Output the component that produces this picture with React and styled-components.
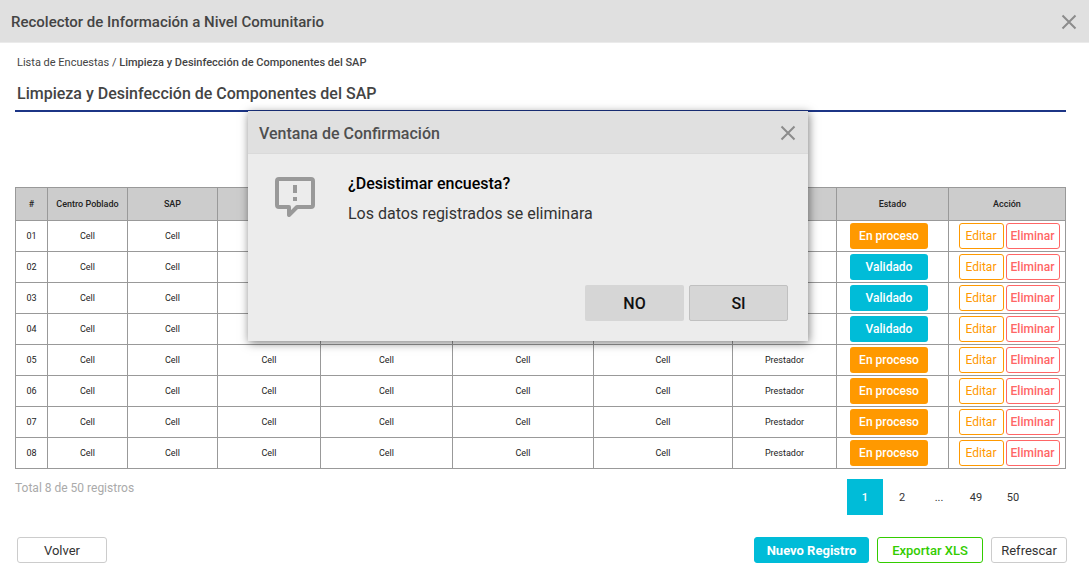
import React from "react";
import styled, { createGlobalStyle, css } from "styled-components";

const GlobalStyle = createGlobalStyle`
  *, *::before, *::after { box-sizing: border-box; }
  body {
    margin: 0;
    background: #fff;
    color: #333;
    font-family: Roboto, "Liberation Sans", sans-serif;
  }
  button { font-family: inherit; cursor: pointer; }
`;

const TitleBar = styled.header`
  display: flex;
  align-items: center;
  justify-content: space-between;
  height: 43px;
  padding: 2px 11px 0;
  background: #e0e0e0;
  border-bottom: 1px solid ${(p) => (p.$inDialog ? "#dadada" : "#ebebeb")};
`;

const BarTitle = styled.h1`
  margin: 0;
  font-size: 15px;
  line-height: 20px;
  font-weight: 500;
  color: #444;
`;

const DialogTitle = styled.h2`
  margin: 0;
  padding-top: 2px;
  font-size: 16px;
  line-height: 20px;
  font-weight: 500;
  color: #4f4f4f;
`;

const CloseButton = styled.button`
  display: flex;
  padding: 1px;
  border: 0;
  background: none;
  color: #8c8c8c;
`;

const Content = styled.main`
  padding: 12px 23px 0 15px;
`;

const Breadcrumb = styled.nav`
  padding-left: 2px;
  font-size: 11px;
  line-height: 16px;
  color: #444;

  a { color: inherit; text-decoration: none; }
  strong { font-weight: 500; }
`;

const PageTitle = styled.h2`
  margin: 13px 0 0;
  padding: 0 0 6px 2px;
  border-bottom: 2px solid #1c3586;
  font-size: 16px;
  line-height: 20px;
  font-weight: 500;
  color: #444;
`;

const Table = styled.table`
  width: 100%;
  margin-top: 75px;
  border-collapse: collapse;
  table-layout: fixed;
  font-size: 9px;
  line-height: 12px;
  color: #222;
`;

const HeadCell = styled.th`
  height: 33px;
  padding: 0;
  border: 1px solid #999;
  background: #ccc;
  font-weight: 500;
`;

const Cell = styled.td`
  height: 31px;
  padding: 0;
  border: 1px solid #999;
  text-align: center;
`;

const StateCell = styled(Cell)`
  padding-right: 7px;
`;

const RowActions = styled.div`
  display: flex;
  justify-content: center;
  gap: 2px;
  padding-left: 4px;
`;

const small = css`
  height: 26px;
  padding: 0;
  border-radius: 3px;
  font-size: 12px;
  line-height: 16px;
`;

const StateBadge = styled.span`
  ${small}
  display: inline-block;
  width: 78px;
  line-height: 26px;
  vertical-align: middle;
  background: ${(p) => (p.$valid ? "#00bcd8" : "#ff9900")};
  color: #fff;
  font-weight: 500;
`;

const RowButton = styled.button`
  ${small}
  width: ${(p) => (p.$danger ? "54px" : "45px")};
  border: 1px solid ${(p) => (p.$danger ? "#ff6666" : "#ff9900")};
  background: #fff;
  color: ${(p) => (p.$danger ? "#ff6666" : "#ff9900")};
  font-weight: ${(p) => (p.$danger ? 500 : 400)};
`;

const TableFooter = styled.div`
  display: flex;
  justify-content: space-between;
  align-items: flex-start;
  padding: 10px 35px 0 0;
`;

const Total = styled.p`
  margin: 0;
  font-size: 12px;
  line-height: 18px;
  color: #aaa;
`;

const Pagination = styled.nav`
  display: flex;
  align-items: center;
  gap: 1px;
  font-size: 11px;
  color: #333;
`;

const PageButton = styled.button`
  width: 36px;
  height: 36px;
  padding: 0;
  border: 0;
  background: ${(p) => (p.$current ? "#00bcd8" : "none")};
  color: ${(p) => (p.$current ? "#fff" : "#333")};
  font-size: 11px;
  font-weight: ${(p) => (p.$current ? 500 : 400)};
`;

const Ellipsis = styled.span`
  width: 36px;
  text-align: center;
`;

const ActionBar = styled.footer`
  display: flex;
  justify-content: space-between;
  padding: 22px 22px 19px 17px;
`;

const ActionGroup = styled.div`
  display: flex;
  gap: 8px;
`;

const tones = {
  plain: css`border-color: #ccc; background: #fff; color: #333;`,
  primary: css`border-color: #00bcd8; background: #00bcd8; color: #fff; font-weight: 700;`,
  success: css`border-color: #33cc00; background: #fff; color: #33cc00; font-weight: 500;`,
};

const ActionButton = styled.button`
  width: ${(p) => p.$width}px;
  height: 26px;
  padding: 0;
  border: 1px solid;
  border-radius: 3px;
  font-size: 13px;
  font-weight: 400;
  ${(p) => tones[p.$tone || "plain"]}
`;

const Dialog = styled.section`
  position: absolute;
  top: 111px;
  left: 248px;
  width: 560px;
  background: #ececec;
  box-shadow: 1px 2px 9px rgba(0, 0, 0, 0.5);
`;

const DialogBody = styled.div`
  display: flex;
  align-items: flex-start;
  gap: 33px;
  padding: 18px 27px 0;

  svg { margin-top: 5px; }
`;

const Question = styled.h3`
  margin: 0;
  font-size: 16px;
  line-height: 24px;
  font-weight: 500;
  color: #000;
`;

const Detail = styled.p`
  margin: 6px 0 0;
  font-size: 16px;
  line-height: 24px;
  color: #333;
`;

const DialogActions = styled.div`
  display: flex;
  justify-content: flex-end;
  gap: 5px;
  padding: 59px 20px 20px;
`;

const DialogButton = styled.button`
  width: 99px;
  height: 36px;
  padding: 0;
  border: ${(p) => (p.$outlined ? "1px solid #c0c0c0" : "0")};
  border-radius: 2px;
  background: #d6d6d6;
  color: #111;
  font-size: 16px;
  font-weight: 500;
`;

const columns = [
  ["#", 32],
  ["Centro Poblado", 80],
  ["SAP", 90],
  ["", 103],
  ["", 132],
  ["", 141],
  ["", 139],
  ["", 104],
  ["Estado", 112],
  ["Acción", 117],
];

const states = [
  "En proceso",
  "Validado",
  "Validado",
  "Validado",
  "En proceso",
  "En proceso",
  "En proceso",
  "En proceso",
];

const rows = states.map((state, i) => ({
  id: `0${i + 1}`,
  cells: ["Cell", "Cell", "Cell", "Cell", "Cell", "Cell", "Prestador"],
  state,
}));

function CloseIcon() {
  return (
    <svg width="16" height="16" viewBox="0 0 16 16" fill="none" stroke="currentColor" strokeWidth="2" aria-hidden="true">
      <path d="M1.5 1.5 14.5 14.5M14.5 1.5 1.5 14.5" />
    </svg>
  );
}

function FeedbackIcon() {
  return (
    <svg width="40" height="40" viewBox="0 0 40 40" fill="none" stroke="#999" strokeWidth="4" strokeLinejoin="round" aria-hidden="true">
      <path d="M4 2H36A2 2 0 0 1 38 4V28A2 2 0 0 1 36 30H22L14 38V30H4A2 2 0 0 1 2 28V4A2 2 0 0 1 4 2Z" />
      <path d="M20 8V16M20 20V24" />
    </svg>
  );
}

export default function App() {
  return (
    <>
      <GlobalStyle />
      <TitleBar>
        <BarTitle>Recolector de Información a Nivel Comunitario</BarTitle>
        <CloseButton type="button" aria-label="Cerrar"><CloseIcon /></CloseButton>
      </TitleBar>

      <Content>
        <Breadcrumb>
          <a href="#encuestas">Lista de Encuestas</a> / <strong>Limpieza y Desinfección de Componentes del SAP</strong>
        </Breadcrumb>
        <PageTitle>Limpieza y Desinfección de Componentes del SAP</PageTitle>

        <Table>
          <colgroup>
            {columns.map(([, width], i) => <col key={i} width={width} />)}
          </colgroup>
          <thead>
            <tr>
              {columns.map(([label], i) => <HeadCell key={i} scope="col">{label}</HeadCell>)}
            </tr>
          </thead>
          <tbody>
            {rows.map((row) => (
              <tr key={row.id}>
                <Cell>{row.id}</Cell>
                {row.cells.map((text, i) => <Cell key={i}>{text}</Cell>)}
                <StateCell>
                  <StateBadge $valid={row.state === "Validado"}>{row.state}</StateBadge>
                </StateCell>
                <Cell>
                  <RowActions>
                    <RowButton type="button">Editar</RowButton>
                    <RowButton type="button" $danger>Eliminar</RowButton>
                  </RowActions>
                </Cell>
              </tr>
            ))}
          </tbody>
        </Table>

        <TableFooter>
          <Total>Total 8 de 50 registros</Total>
          <Pagination>
            <PageButton type="button" $current aria-current="page">1</PageButton>
            <PageButton type="button">2</PageButton>
            <Ellipsis>...</Ellipsis>
            <PageButton type="button">49</PageButton>
            <PageButton type="button">50</PageButton>
          </Pagination>
        </TableFooter>
      </Content>

      <ActionBar>
        <ActionButton type="button" $width={90}>Volver</ActionButton>
        <ActionGroup>
          <ActionButton type="button" $width={115} $tone="primary">Nuevo Registro</ActionButton>
          <ActionButton type="button" $width={106} $tone="success">Exportar XLS</ActionButton>
          <ActionButton type="button" $width={76}>Refrescar</ActionButton>
        </ActionGroup>
      </ActionBar>

      <Dialog role="dialog" aria-labelledby="dialog-title">
        <TitleBar $inDialog>
          <DialogTitle id="dialog-title">Ventana de Confirmación</DialogTitle>
          <CloseButton type="button" aria-label="Cerrar ventana"><CloseIcon /></CloseButton>
        </TitleBar>
        <DialogBody>
          <FeedbackIcon />
          <div>
            <Question>¿Desistimar encuesta?</Question>
            <Detail>Los datos registrados se eliminara</Detail>
          </div>
        </DialogBody>
        <DialogActions>
          <DialogButton type="button">NO</DialogButton>
          <DialogButton type="button" $outlined>SI</DialogButton>
        </DialogActions>
      </Dialog>
    </>
  );
}
